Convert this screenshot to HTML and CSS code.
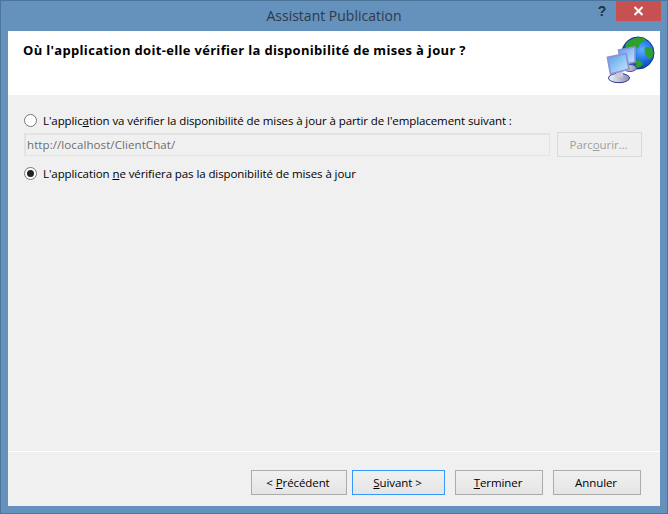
FILE: index.html
```html
<!DOCTYPE html>
<html lang="fr">
<head>
<meta charset="utf-8">
<title>Assistant Publication</title>
<link rel="stylesheet" href="styles.css">
</head>
<body>
<div class="window">
  <div class="titlebar">
    <div class="title">Assistant Publication</div>
    <div class="help">?</div>
    <div class="close">
      <svg width="11" height="10" viewBox="0 0 11 10"><path d="M1.5 1 L9.5 9 M9.5 1 L1.5 9" stroke="#fff" stroke-width="2" fill="none"/></svg>
    </div>
  </div>
  <div class="client">
    <div class="header">
      <h1 class="heading">Où l'application doit-elle vérifier la disponibilité de mises à jour ?</h1>
      <svg class="logo" width="50" height="50" viewBox="0 0 50 50">
        <defs>
          <radialGradient id="globe" cx="0.62" cy="0.4" r="0.7">
            <stop offset="0" stop-color="#5fb0ff"/>
            <stop offset="0.55" stop-color="#1668e0"/>
            <stop offset="1" stop-color="#0b2f9a"/>
          </radialGradient>
          <linearGradient id="screen" x1="0" y1="0" x2="1" y2="1">
            <stop offset="0" stop-color="#4f9fe8"/>
            <stop offset="1" stop-color="#cfeaff"/>
          </linearGradient>
          <linearGradient id="base" x1="0" y1="0" x2="1" y2="0">
            <stop offset="0" stop-color="#f4f4f8"/>
            <stop offset="1" stop-color="#8d8fae"/>
          </linearGradient>
        </defs>
        <circle cx="32" cy="18" r="16" fill="url(#globe)" stroke="#14307f" stroke-width="1"/>
        <path d="M20 8.500 C26 2 36 1 40 4.500 C38 7.500 35 6.500 33 9.500 C35 11.500 31 14.500 28 13.500 C26 11.500 24 12.500 22 15.500 C19 13.500 19 10.500 20 8.500Z" fill="#2ea02e"/>
        <path d="M39 12.500 C43 11 46.500 13.500 47.500 17.500 C47.500 22.500 44 24.500 42 23.500 C40 20.500 38 16.500 39 12.500Z" fill="#2ea02e"/>
        <path d="M30 25.500 C33 24.500 37 26.500 37 29.500 C35 32 32 33 30 33 C31 30.500 29 28.500 30 25.500Z" fill="#2ea02e"/>
        <ellipse cx="24" cy="33" rx="6.500" ry="3.500" fill="url(#base)" stroke="#4a4f96" stroke-width="1"/>
        <path d="M17 26 L21 26 L21 33 L17 33 Z" fill="#c8c9dc"/>
        <path d="M12.500 15 L29 12 L29 27 L15 30 Z" fill="url(#screen)" stroke="#8f92d8" stroke-width="1.600"/>
        <ellipse cx="13" cy="43" rx="10.500" ry="4.700" fill="url(#base)" stroke="#2f3a94" stroke-width="1"/>
        <path d="M10 35 L17 35 L17 42 L10 42 Z" fill="#c8c9dc"/>
        <path d="M1.500 22.500 L20 18.500 L23 34 L4.500 39 Z" fill="url(#screen)" stroke="#8f92d8" stroke-width="1.800"/>
      </svg>
    </div>
    <div class="body">
      <label class="option">
        <span class="radio"></span>
        <span>L'applic<u>a</u>tion va vérifier la disponibilité de mises à jour à partir de l'emplacement suivant :</span>
      </label>
      <div class="location-row">
        <div class="field">http://localhost/ClientChat/</div>
        <div class="btn browse">Parc<u>o</u>urir...</div>
      </div>
      <label class="option second">
        <span class="radio checked"></span>
        <span>L'application <u>n</u>e vérifiera pas la disponibilité de mises à jour</span>
      </label>
    </div>
    <div class="footer">
      <div class="btn prev">&lt; <u>P</u>récédent</div>
      <div class="btn next default"><u>S</u>uivant &gt;</div>
      <div class="btn finish"><u>T</u>erminer</div>
      <div class="btn cancel">Annuler</div>
    </div>
  </div>
</div>
</body>
</html>
```
FILE: styles.css
```css
* { box-sizing: border-box; }
html, body { margin: 0; padding: 0; }
body {
  width: 668px;
  height: 514px;
  overflow: hidden;
  font-family: "Open Sans", "Noto Sans", sans-serif;
  font-size: 11.5px;
  letter-spacing: -0.09px;
  color: #000;
}
.window {
  width: 668px;
  height: 514px;
  background: #6591bd;
  border: 1px solid #4d759c;
  padding: 0 7px 7px;
  display: flex;
  flex-direction: column;
}
.titlebar {
  height: 30px;
  flex: none;
  display: flex;
  align-items: flex-start;
  position: relative;
}
.title {
  position: absolute;
  left: 0;
  right: 0;
  top: 5px;
  text-align: center;
  font-size: 14px;
  letter-spacing: 0;
  line-height: 20px;
  color: #2f3a46;
}
.help {
  margin-left: auto;
  margin-right: 8px;
  width: 12px;
  text-align: center;
  font: bold 14px/20px "Liberation Sans", sans-serif;
  color: #22303c;
}
.close {
  width: 45px;
  height: 20px;
  margin-right: -1px;
  background: #c75050;
  display: flex;
  align-items: center;
  justify-content: center;
}
.client {
  flex: 1;
  display: flex;
  flex-direction: column;
  background: #f0f0f0;
  min-height: 0;
}
.header {
  height: 64px;
  flex: none;
  background: #fff;
  display: flex;
  justify-content: space-between;
  padding: 10px 4px 0 15px;
}
.heading {
  margin: 0;
  font-size: 13px;
  font-weight: 700;
  line-height: 18px;
  letter-spacing: 0.32px;
}
.logo { margin-top: -6px; }
.body {
  flex: 1;
  padding: 16px 18px 0 16px;
  border-bottom: 1px solid #fff;
}
.option {
  display: flex;
  align-items: center;
  gap: 6px;
  height: 18px;
  color: #000;
}
.second { margin-top: 7px; }
.radio {
  width: 13px;
  height: 13px;
  border-radius: 50%;
  border: 1px solid #777;
  background: #fff;
  flex: none;
  display: flex;
  align-items: center;
  justify-content: center;
}
.checked::after {
  content: "";
  width: 7px;
  height: 7px;
  border-radius: 50%;
  background: #222;
}
.location-row {
  display: flex;
  align-items: center;
  gap: 7px;
  margin-top: 3px;
}
.field {
  width: 526px;
  height: 23px;
  border: 2px solid #e3e3e3;
  border-right-width: 1px;
  border-bottom-width: 1px;
  padding-left: 1px;
  line-height: 19px;
  letter-spacing: 0.09px;
  color: #6d6d6d;
  background: #f0f0f0;
}
.btn {
  height: 25px;
  border: 1px solid #acacac;
  background: linear-gradient(#f0f0f0, #e5e5e5);
  display: flex;
  align-items: center;
  justify-content: center;
  white-space: pre;
  padding-right: 2px;
  color: #000;
}
.browse {
  width: 85px;
  background: #efefef;
  border-color: #d9d9d9;
  color: #a0a0a0;
}
.footer {
  height: 54px;
  flex: none;
  display: flex;
  padding: 18px 0 0 243px;
}
.prev { width: 96px; }
.next { width: 93px; margin-left: 5px; }
.finish { width: 88px; margin-left: 10px; }
.cancel { width: 88px; margin-left: 10px; }
.default { border-color: #3399ff; }
```
